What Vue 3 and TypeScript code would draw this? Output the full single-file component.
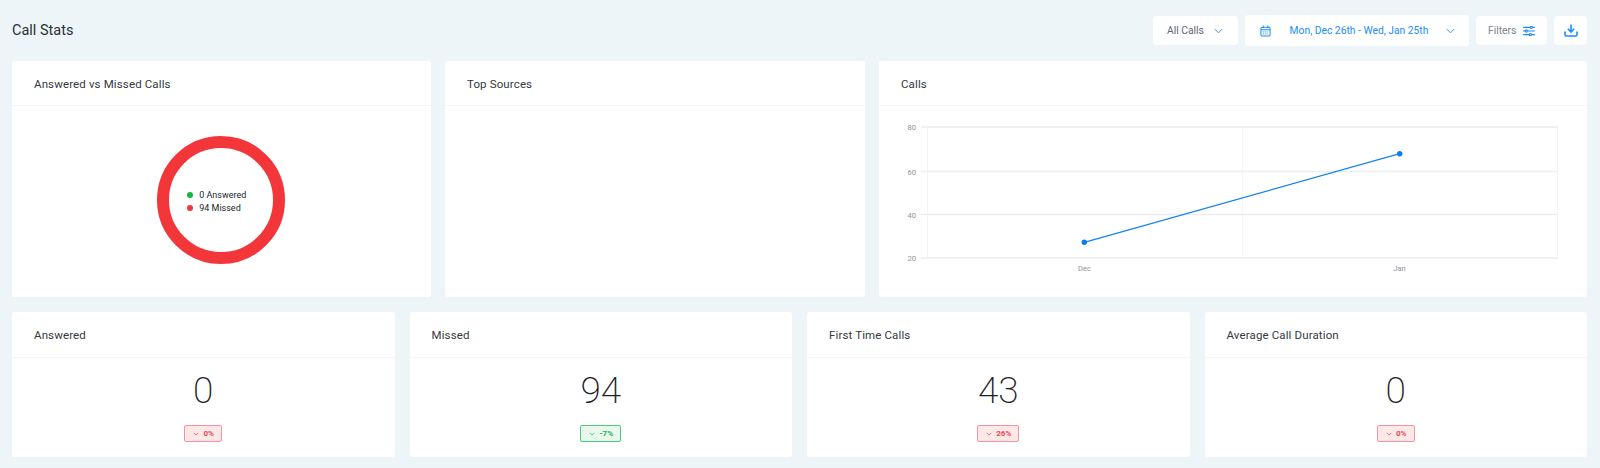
<script setup lang="ts">
interface Stat { title: string; value: string; delta: string; good: boolean }
const stats: Stat[] = [
  { title: 'Answered', value: '0', delta: '0%', good: false },
  { title: 'Missed', value: '94', delta: '-7%', good: true },
  { title: 'First Time Calls', value: '43', delta: '26%', good: false },
  { title: 'Average Call Duration', value: '0', delta: '0%', good: false },
]
const gridY = [21, 65.5, 108.5, 152]
const yLabels = ['80', '60', '40', '20']
</script>

<template>
  <div class="page">
    <header class="top">
      <h1 class="page-title">Call Stats</h1>
      <div class="tools">
        <button class="tool all">
          <span>All Calls</span>
          <svg class="chev" viewBox="0 0 10 6" width="9" height="6"><path d="M1 1l4 4 4-4" fill="none" stroke="#1a8cff" stroke-width="1" /></svg>
        </button>
        <button class="tool date">
          <svg viewBox="0 0 12 13" width="11" height="12" fill="none" stroke="#1a8cff" stroke-width="1.1"><rect x="1" y="2.5" width="10" height="9.5" rx="1.5" /><path d="M1 5.2h10M3.5.5v3M8.5.5v3" /><path d="M3 7.5h6M3 9.7h6" stroke-width="1" stroke-dasharray="1.2 .9" /></svg>
          <span class="range">Mon, Dec 26th - Wed, Jan 25th</span>
          <svg class="chev" viewBox="0 0 10 6" width="9" height="6"><path d="M1 1l4 4 4-4" fill="none" stroke="#1a8cff" stroke-width="1" /></svg>
        </button>
        <button class="tool filters">
          <span>Filters</span>
          <svg viewBox="0 0 13 11" width="12" height="10" fill="none" stroke="#1a8cff" stroke-width="1.3"><path d="M0 1.5h7.5M10.5 1.5H13M0 5.5h2M5 5.5h8M0 9.5h6.5M9.5 9.5H13" /><circle cx="9" cy="1.5" r="1.2" /><circle cx="3.5" cy="5.5" r="1.2" /><circle cx="8" cy="9.5" r="1.2" /></svg>
        </button>
        <button class="tool dl" aria-label="Download">
          <svg viewBox="0 0 14 13" width="14" height="13" fill="none" stroke="#1a8cff" stroke-width="1.6"><path d="M7 .5v7.2M3.8 4.8 7 8l3.2-3.2" /><path d="M1 7.5v3c0 .9.6 1.5 1.5 1.5h9c.9 0 1.5-.6 1.5-1.5v-3" /></svg>
        </button>
      </div>
    </header>

    <section class="row charts">
      <article class="card">
        <h2 class="card-title">Answered vs Missed Calls</h2>
        <div class="donut-wrap">
          <div class="donut">
            <ul class="legend">
              <li><i class="dot green"></i>0 Answered</li>
              <li><i class="dot red"></i>94 Missed</li>
            </ul>
          </div>
        </div>
      </article>
      <article class="card">
        <h2 class="card-title">Top Sources</h2>
      </article>
      <article class="card">
        <h2 class="card-title">Calls</h2>
        <svg class="plot" viewBox="0 0 708 191" width="708" height="191">
          <rect x="48.5" y="21" width="630" height="131" fill="none" stroke="#f3f4f5" />
          <line x1="363.3" x2="363.3" y1="21" y2="152" stroke="#f1f2f3" />
          <line v-for="y in gridY" :key="y" x1="42" x2="679" :y1="y" :y2="y" stroke="#ebedef" stroke-width="1.4" />
          <text v-for="(l, i) in yLabels" :key="l" x="37" :y="gridY[i] + 3" class="tick" text-anchor="end">{{ l }}</text>
          <line x1="205.3" y1="136.3" x2="520.7" y2="47.7" stroke="#1482f0" stroke-width="1.3" />
          <circle cx="205.3" cy="136.3" r="2.7" fill="#0a7cf0" />
          <circle cx="520.7" cy="47.7" r="2.7" fill="#0a7cf0" />
          <text x="205.5" y="165" class="tick" text-anchor="middle">Dec</text>
          <text x="520.5" y="165" class="tick" text-anchor="middle">Jan</text>
        </svg>
      </article>
    </section>

    <section class="row stats">
      <article v-for="s in stats" :key="s.title" class="card stat">
        <h2 class="card-title">{{ s.title }}</h2>
        <div class="stat-body">
          <div class="value">{{ s.value }}</div>
          <div class="badge" :class="s.good ? 'up' : 'down'">
            <svg viewBox="0 0 8 5" width="6" height="4"><path d="M1 1l3 3 3-3" fill="none" stroke="currentColor" stroke-width="1" /></svg>
            <span>{{ s.delta }}</span>
          </div>
        </div>
      </article>
    </section>
  </div>
</template>

<style scoped>
.page {
  width: 1600px;
  height: 468px;
  box-sizing: border-box;
  padding: 0 13px 0 12px;
  background: #edf5f9;
  font-family: Roboto, "Liberation Sans", sans-serif;
  color: #24292e;
  overflow: hidden;
}
.top {
  height: 61px;
  display: flex;
  align-items: center;
  justify-content: space-between;
}
.page-title {
  margin: 0;
  font-size: 14.5px;
  font-weight: 400;
  color: #2b3036;
}
.tools { display: flex; align-items: center; gap: 7px; }
.tool {
  height: 29px;
  display: flex;
  align-items: center;
  background: #fff;
  border: 0;
  border-radius: 4px;
  padding: 0;
  font: 400 10.3px Roboto, "Liberation Sans", sans-serif;
  color: #5d6670;
}
.all { width: 85px; padding-left: 14px; gap: 10px; box-sizing: border-box; }
.date {
  width: 224px;
  height: 31px;
  box-sizing: border-box;
  padding: 0 14px 0 15px;
  color: #1a8cff;
  justify-content: space-between;
}
.range { margin-left: 17px; margin-right: 16px; white-space: nowrap; }
.filters { width: 71px; box-sizing: border-box; padding-left: 12px; gap: 7px; color: #7c848c; }
.dl { width: 33px; justify-content: center; }
.row { display: grid; }
.charts { grid-template-columns: 418.5px 419.5px 1fr; height: 236px; column-gap: 14.5px; }
.stats { grid-template-columns: repeat(4, 1fr); height: 145px; margin-top: 15px; column-gap: 15px; }
.card {
  background: #fff;
  border-radius: 3px;
  display: flex;
  flex-direction: column;
  overflow: hidden;
  min-width: 0;
}
.card-title {
  margin: 0;
  height: 44px;
  padding: 1px 0 0 22px;
  box-sizing: content-box;
  flex: none;
  display: flex;
  align-items: center;
  border-bottom: 1px solid #f2f6f8;
  font-size: 11.5px;
  letter-spacing: 0.13px;
  font-weight: 400;
  color: #33393f;
}
.charts .card-title { height: 43px; }
.donut-wrap {
  flex: 1;
  display: flex;
  align-items: center;
  justify-content: center;
  padding: 0 1px 4px 0;
}
.donut {
  width: 128px;
  height: 128px;
  box-sizing: border-box;
  border: 12px solid #f33639;
  border-radius: 50%;
  display: flex;
  align-items: center;
  justify-content: center;
}
.legend { list-style: none; margin: 0; padding: 4px 8px 0 0; font-size: 9px; color: #22272c; }
.legend li { display: flex; align-items: center; height: 13px; white-space: nowrap; }
.dot { width: 6px; height: 6px; border-radius: 50%; margin-right: 6px; }
.green { background: #12b83e; }
.red { background: #f33639; }
.plot { display: block; }
.tick { font: 400 7.5px Roboto, "Liberation Sans", sans-serif; fill: #8b929a; }
.stat-body {
  flex: 1;
  display: flex;
  flex-direction: column;
  align-items: center;
}
.value {
  margin-top: 11px;
  font-size: 37px;
  line-height: 44px;
  font-weight: 200;
  color: #1e2226;
}
.badge {
  margin-top: 12px;
  height: 17px;
  padding: 0 7px 0 8px;
  box-sizing: border-box;
  display: flex;
  align-items: center;
  gap: 4px;
  border: 1px solid;
  border-radius: 2px;
  font-size: 8px;
  font-weight: 700;
}
.down { color: #f0474f; background: #fde8e9; border-color: #f8939a; }
.up { color: #1cb550; background: #e8f8ed; border-color: #4fcb78; }
</style>
